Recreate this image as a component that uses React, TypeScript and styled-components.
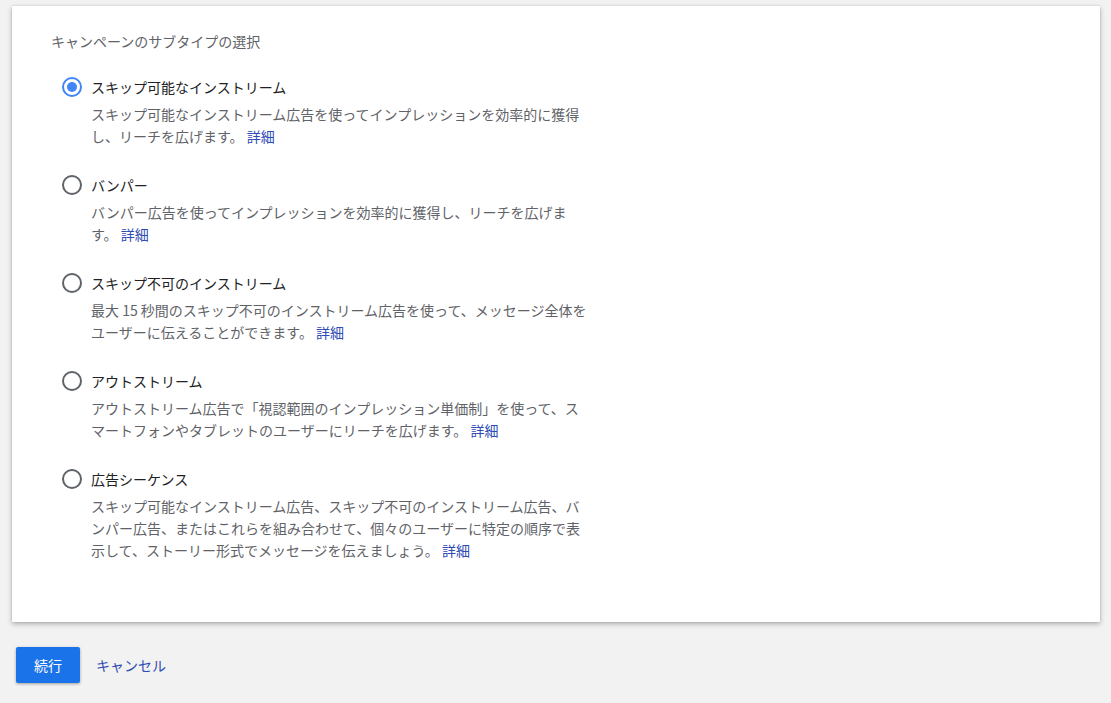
import React, { useState } from "react";
import styled, { createGlobalStyle } from "styled-components";

const GlobalStyle = createGlobalStyle`
  html, body { margin: 0; padding: 0; background: #f2f2f2; }
  body {
    font-family: "Noto Sans CJK JP", "Noto Sans", "Liberation Sans", sans-serif;
    -webkit-font-smoothing: antialiased;
    text-spacing-trim: space-all;
  }
  * { box-sizing: border-box; }
`;

const Page = styled.div`
  padding: 6px 11px 19px 12px;
  display: flex;
  flex-direction: column;
  gap: 25px;
`;

const Card = styled.section`
  background: #fff;
  box-shadow: 0 2px 5px rgba(0, 0, 0, 0.28), 0 0 2px rgba(0, 0, 0, 0.12);
  padding: 25px 39px 61px;
  display: flex;
  flex-direction: column;
  gap: 26px;
`;

const Title = styled.h2`
  margin: 0;
  font-size: 14px;
  line-height: 20px;
  font-weight: 400;
  color: #5f6368;
`;

const OptionList = styled.div`
  display: flex;
  flex-direction: column;
  gap: 28px;
  padding-left: 11px;
`;

const Option = styled.label`
  display: grid;
  grid-template-columns: 20px 1fr;
  column-gap: 9px;
  row-gap: 6px;
  cursor: pointer;
`;

const Radio = styled.span<{ $checked: boolean }>`
  width: 20px;
  height: 20px;
  border-radius: 50%;
  border: 2px solid ${(p) => (p.$checked ? "#4285f4" : "#5f6368")};
  display: flex;
  align-items: center;
  justify-content: center;
  &::after {
    content: "";
    width: 10px;
    height: 10px;
    border-radius: 50%;
    background: #4285f4;
    display: ${(p) => (p.$checked ? "block" : "none")};
  }
`;

const Label = styled.span`
  font-size: 14px;
  line-height: 20px;
  color: #202124;
`;

const Desc = styled.p`
  grid-column: 2;
  margin: 0;
  max-width: 500px;
  font-size: 14px;
  line-height: 22px;
  color: #5f6368;
  text-spacing-trim: space-all;
`;

const Link = styled.a`
  color: #2f4cb4;
  text-decoration: none;
  cursor: pointer;
`;

const Actions = styled.div`
  display: flex;
  align-items: center;
  gap: 16px;
  padding-left: 4px;
`;

const PrimaryButton = styled.button`
  width: 64px;
  height: 36px;
  border: none;
  border-radius: 2px;
  background: #1a73e8;
  color: #fff;
  font-family: inherit;
  font-size: 14px;
  box-shadow: 0 1px 3px rgba(0, 0, 0, 0.35);
  cursor: pointer;
`;

const CancelLink = styled.a`
  color: #2f4cb4;
  font-size: 14px;
  cursor: pointer;
`;

const options = [
  {
    label: "スキップ可能なインストリーム",
    desc: "スキップ可能なインストリーム広告を使ってインプレッションを効率的に獲得し、リーチを広げます。",
  },
  {
    label: "バンパー",
    desc: "バンパー広告を使ってインプレッションを効率的に獲得し、リーチを広げます。",
  },
  {
    label: "スキップ不可のインストリーム",
    desc: "最大 15 秒間のスキップ不可のインストリーム広告を使って、メッセージ全体をユーザーに伝えることができます。",
  },
  {
    label: "アウトストリーム",
    desc: "アウトストリーム広告で「視認範囲のインプレッション単価制」を使って、スマートフォンやタブレットのユーザーにリーチを広げます。",
  },
  {
    label: "広告シーケンス",
    desc: "スキップ可能なインストリーム広告、スキップ不可のインストリーム広告、バンパー広告、またはこれらを組み合わせて、個々のユーザーに特定の順序で表示して、ストーリー形式でメッセージを伝えましょう。",
  },
];

export default function App() {
  const [selected, setSelected] = useState(0);
  return (
    <>
      <GlobalStyle />
      <Page>
        <Card>
          <Title>キャンペーンのサブタイプの選択</Title>
          <OptionList>
            {options.map((o, i) => (
              <Option key={o.label} onClick={() => setSelected(i)}>
                <Radio $checked={selected === i} />
                <Label>{o.label}</Label>
                <Desc>
                  {o.desc} <Link>詳細</Link>
                </Desc>
              </Option>
            ))}
          </OptionList>
        </Card>
        <Actions>
          <PrimaryButton>続行</PrimaryButton>
          <CancelLink>キャンセル</CancelLink>
        </Actions>
      </Page>
    </>
  );
}
